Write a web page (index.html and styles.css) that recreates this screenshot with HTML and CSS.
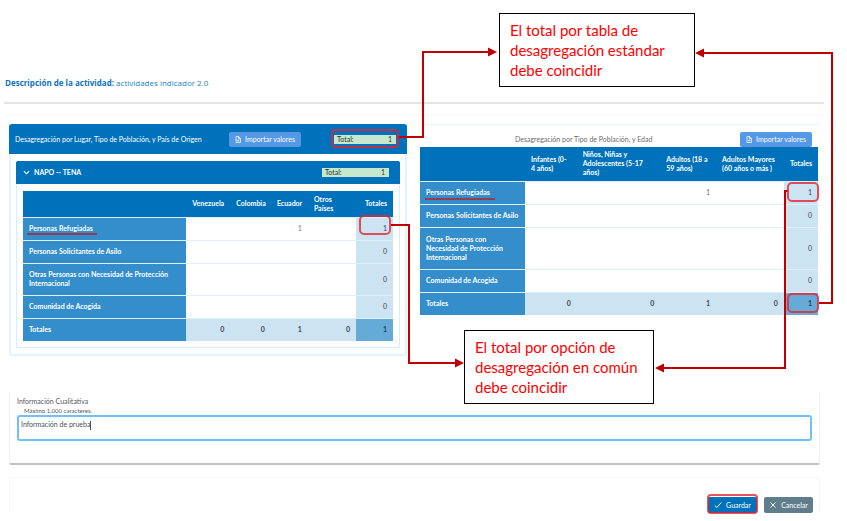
FILE: index.html
```html
<!DOCTYPE html>
<html lang="es">
<head>
<meta charset="utf-8">
<title>Descripción de la actividad</title>
<link rel="stylesheet" href="styles.css">
</head>
<body>
<svg class="defs" width="0" height="0" aria-hidden="true">
  <symbol id="file" viewBox="0 0 12 14"><path d="M2 1h5l4 4v8H2zM7 1v4h4M6.500 6.500v4M4.500 8.500l2 2 2-2" fill="none" stroke="currentColor" stroke-width="1.500"/></symbol>
  <symbol id="chevron" viewBox="0 0 8 8"><path d="M1 2.500l3 3 3-3" fill="none" stroke="currentColor" stroke-width="1.300"/></symbol>
  <symbol id="check" viewBox="0 0 8 8"><path d="M.8 4.600l2 1.900L7.300 1.500" fill="none" stroke="currentColor" stroke-width="1"/></symbol>
  <symbol id="cross" viewBox="0 0 8 8"><path d="M1.500 1.500l5 5m0-5l-5 5" fill="none" stroke="currentColor" stroke-width="1"/></symbol>
</svg>
<main class="page">
  <h1 class="activity"><strong>Descripción de la actividad:</strong> actividades indicador 2.0</h1>
  <div class="panels">
    <section class="panel">
      <header class="panel-head">
        <h2>Desagregación por Lugar, Tipo de Población, y País de Origen</h2>
        <button class="import" type="button"><svg><use href="#file"/></svg>Importar valores</button>
        <div class="total"><span>Total:</span><span>1</span></div>
      </header>
      <section class="place">
        <header class="place-head">
          <button class="toggle" type="button"><svg><use href="#chevron"/></svg>NAPO -- TENA</button>
          <div class="total"><span>Total:</span><span>1</span></div>
        </header>
        <table class="by-origin">
          <colgroup><col class="w44"><col class="w12"><col class="w11"><col class="w10"><col class="w13"><col></colgroup>
          <thead><tr><td></td><th scope="col">Venezuela</th><th scope="col">Colombia</th><th scope="col">Ecuador</th><th scope="col" class="start">Otros Países</th><th scope="col">Totales</th></tr></thead>
          <tbody>
            <tr><th scope="row">Personas Refugiadas</th><td></td><td></td><td>1</td><td></td><td class="sum">1</td></tr>
            <tr><th scope="row">Personas Solicitantes de Asilo</th><td></td><td></td><td></td><td></td><td class="sum">0</td></tr>
            <tr><th scope="row">Otras Personas con Necesidad de Protección Internacional</th><td></td><td></td><td></td><td></td><td class="sum">0</td></tr>
            <tr><th scope="row">Comunidad de Acogida</th><td></td><td></td><td></td><td></td><td class="sum">0</td></tr>
          </tbody>
          <tfoot><tr><th scope="row">Totales</th><td>0</td><td>0</td><td>1</td><td>0</td><td class="grand">1</td></tr></tfoot>
        </table>
      </section>
    </section>
    <section class="panel-plain">
      <header class="plain-head">
        <h2>Desagregación por Tipo de Población, y Edad</h2>
        <button class="import" type="button"><svg><use href="#file"/></svg>Importar valores</button>
      </header>
      <table class="by-age">
        <colgroup><col class="labels"><col class="w13"><col class="w21"><col class="w14"><col class="w17"><col></colgroup>
        <thead><tr><td></td><th scope="col">Infantes (0-<br>4 años)</th><th scope="col">Niños, Niñas y Adolescentes (5-17 años)</th><th scope="col">Adultos (18 a 59 años)</th><th scope="col">Adultos Mayores (60 años o más )</th><th scope="col">Totales</th></tr></thead>
        <tbody>
          <tr><th scope="row">Personas Refugiadas</th><td></td><td></td><td>1</td><td></td><td class="sum">1</td></tr>
          <tr><th scope="row">Personas Solicitantes de Asilo</th><td></td><td></td><td></td><td></td><td class="sum">0</td></tr>
          <tr><th scope="row">Otras Personas con<br>Necesidad de Protección Internacional</th><td></td><td></td><td></td><td></td><td class="sum">0</td></tr>
          <tr><th scope="row">Comunidad de Acogida</th><td></td><td></td><td></td><td></td><td class="sum">0</td></tr>
        </tbody>
        <tfoot><tr><th scope="row">Totales</th><td>0</td><td>0</td><td>1</td><td>0</td><td class="grand">1</td></tr></tfoot>
      </table>
    </section>
  </div>
  <section class="notes">
    <label for="info">Información Cualitativa</label>
    <small id="hint">Máximo 1,000 caracteres.</small>
    <textarea id="info" rows="2" aria-describedby="hint">Información de prueba</textarea>
  </section>
  <footer class="actions">
    <button class="save" type="button"><svg><use href="#check"/></svg>Guardar</button>
    <button class="cancel" type="button"><svg><use href="#cross"/></svg>Cancelar</button>
  </footer>
</main>
<div class="annotations">
  <svg class="arrows" width="847" height="521" viewBox="0 0 847 521" aria-hidden="true">
    <g class="underline"><path d="M27 234H97M425 199H495"/></g>
    <g class="lines"><path d="M398 137H423V52H490M819 303H832V53H703M391 225H409V363H457M788 191H785V368H663"/></g>
    <g class="heads"><path d="M497 52l-9-4.500v9zM695 53l9-4.500v9zM464 363l-9-4.500v9zM655 368l9-4.500v9z"/></g>
    <g class="rings"><rect x="332" y="130" width="66" height="17" rx="3"/><rect x="360" y="216" width="30" height="18" rx="4"/><rect x="788" y="183" width="30" height="18" rx="4"/><rect x="788" y="294" width="30" height="18" rx="4"/><rect x="708" y="495" width="49" height="18" rx="3"/></g>
    <path class="caret" d="M90.500 421v9"/>
  </svg>
  <p class="callout callout-total">El total por tabla de<br>desagregación estándar<br>debe coincidir</p>
  <p class="callout callout-option">El total por opción de<br>desagregación en común<br>debe coincidir</p>
</div>
</body>
</html>
```
FILE: styles.css
```css
* { box-sizing: border-box; }
body { margin: 0; background: #fff; color: #55595d; font: 7px/9px Lato, "Open Sans", sans-serif; }
h1, h2, p { margin: 0; font-weight: 400; }
button { font: inherit; border: 0; padding: 0; display: flex; align-items: center; justify-content: center; color: #fff; }
.defs { position: absolute; }
.page { padding: 76px 23px 0 4px; }

.activity { color: #2482c5; font-family: "Open Sans", sans-serif; font-size: 8px; line-height: 14px; padding: 0 1px 12px; border-bottom: 2px solid #e4e4e4; }
.activity strong { color: #1173b9; }
.panels { display: grid; grid-template-columns: 1fr 1fr; gap: 13px; align-items: start; margin-top: 11px; padding: 8px 6px 0 5px; border-top: 1px solid #f7f7f7; }
h2 { font-size: 7px; line-height: 9px; }

.panel { border: 2px solid #e3f3fe; border-top: 0; border-radius: 3px; padding-bottom: 6px; }
.panel-head { display: flex; align-items: center; height: 30px; margin: 0 -2px; padding: 0 11px 0 6px; background: #0072bc; color: #fff; border-radius: 3px 3px 0 0; }
.panel-head h2 { flex: 1; }
.import { width: 72px; height: 15px; gap: 4px; background: #5498e6; border-radius: 2px; }
.import svg { width: 6px; height: 7px; }
.panel-head .import { margin-right: 33px; }
.total { display: flex; justify-content: space-between; width: 64px; height: 9px; padding: 0 4px 0 3px; background: #c7e8cc; color: #26352b; }
.panel-head .total { width: 62px; }
.place { margin: 7px 5px 0; border: 1px solid #d5edfd; border-top: 0; border-radius: 2px; padding: 0 6px 6px; }
.place-head { display: flex; align-items: center; justify-content: space-between; height: 23px; margin: 0 -7px 7px; padding: 0 11px 0 7px; background: #0072bc; border-radius: 2px 2px 0 0; }
.place-head .total { width: 67px; }
.toggle { background: none; gap: 4px; font-weight: 700; }
.toggle svg { width: 7px; height: 7px; }

table { width: 100%; table-layout: fixed; border-collapse: collapse; }
.w10 { width: 10%; } .w11 { width: 11%; } .w12 { width: 12%; } .w13 { width: 13%; } .w14 { width: 14%; }
.w17 { width: 17%; } .w21 { width: 21%; } .w44 { width: 44%; }
.labels { width: 105px; }
th, td { padding: 0 6px; height: 23px; text-align: right; }
th { color: #fff; font-weight: 700; text-align: left; padding-right: 2px; }
thead th, thead td { background: #0072bc; height: 26px; }
.by-age thead th { height: 34px; }
thead th:last-child { text-align: right; padding-right: 6px; }
.by-origin thead th { text-align: right; padding-right: 6px; }
.by-origin thead .start { text-align: left; }
tbody tr, tfoot tr { border-top: 1px solid #dceffb; }
tbody th, tfoot th { background: #338ecb; }
tbody tr:nth-child(3) > * { height: 32px; }
.by-age tbody tr:nth-child(3) > * { height: 42px; }
tbody td { color: #777; }
.sum, tfoot td { background: #cce3f2; color: #404950; }
tfoot td { font-weight: 700; }
tfoot .grand { background: #66aad7; color: #24435c; }

.panel-plain { border-top: 1px solid #e3f3fe; padding-top: 7px; }
.plain-head { display: grid; grid-template-columns: 1fr auto; align-items: center; padding: 0 6px 0 95px; height: 15px; color: #6b6b6b; }

.notes { margin: 36px 4px 0 5px; height: 73px; padding: 4px 7px 0; border: 1px solid #eee; border-top: 0; border-bottom: 2px solid #c2c2c2; border-radius: 0 0 2px 2px; }
.notes label, .notes small { display: block; font-size: 7px; line-height: 10px; }
.notes small { font-size: 6px; line-height: 8px; margin: 1px 7px 0; }
textarea { display: block; width: 100%; height: 26px; padding: 2px; border: 2px solid #72c0f3; border-radius: 3px; color: #495057; font: 7px/10px Lato, sans-serif; resize: none; outline: 0; }
.actions { display: flex; justify-content: flex-end; gap: 7px; margin: 12px 4px 0 5px; height: 36px; padding: 19px 6px 0; border: 1px solid #f7f7f7; border-bottom: 0; }
.actions button { width: 49px; height: 16px; gap: 4px; border-radius: 2px; }
.actions svg { width: 8px; height: 8px; }
.actions .save { background: #0072bc; }
.actions .cancel { background: #607d8b; }

.annotations { position: absolute; inset: 0; pointer-events: none; }
.arrows { display: block; fill: none; }
.lines { stroke: #c00000; stroke-width: 2; }
.heads { fill: #c00000; }
.rings { stroke: #e1252f; stroke-width: 2; stroke-opacity: .8; }
.underline { stroke: #963c50; stroke-width: 2; }
.caret { stroke: #495057; }
.callout { position: absolute; height: 74px; padding: 6px 10px; border: 1px solid #000; background: #fff; color: #f00; font: 15px/20px Lato, sans-serif; white-space: nowrap; }
.callout-total { left: 499px; top: 13px; width: 196px; }
.callout-option { left: 464px; top: 330px; width: 190px; }
```
